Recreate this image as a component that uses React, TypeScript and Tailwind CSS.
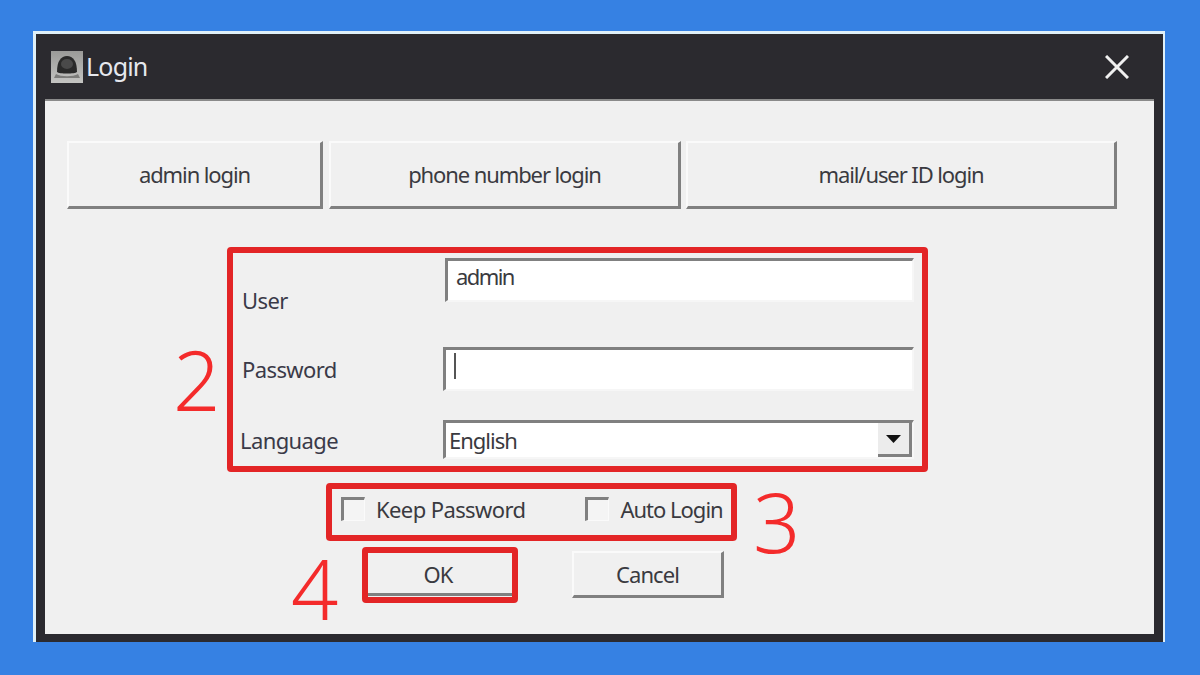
import React from 'react';

const uiFont = "font-['Noto_Sans',sans-serif]";

const TopButton = ({ label, width }: { label: string; width: string }) => (
  <button className={`${width} h-[68px] bg-[#f0f0f0] border-t-2 border-l-2 border-t-[#fafafa] border-l-[#fafafa] border-r-[3px] border-b-[3px] border-r-[#808080] border-b-[#808080] text-[22px] text-[#3a3a40] tracking-[-1.1px]`}>
    {label}
  </button>
);

const Field = ({ className, children }: { className: string; children?: React.ReactNode }) => (
  <div className={`${className} bg-white border-t-[3px] border-l-[3px] border-t-[#808080] border-l-[#808080] border-r-2 border-b-2 border-r-[#f6f6f6] border-b-[#f6f6f6] text-[22px] text-[#3a3a40]`}>
    {children}
  </div>
);

const Check = ({ className }: { className: string }) => (
  <div className={`${className} w-6 h-6 bg-[#f4f4f4] border-t-[3px] border-l-[3px] border-t-[#808080] border-l-[#808080] border-r border-b border-r-[#fafafa] border-b-[#fafafa]`} />
);

export default function App() {
  return (
    <div className={`${uiFont} w-[1200px] h-[675px] overflow-hidden bg-[#3681e3] pt-[31px] pl-[33px]`}>
      <div className="w-[1132px] h-[611px] flex flex-col bg-[#2b2a2f] border-t-[3px] border-l-[3px] border-r-2 border-[#dff0f8] px-[9px] pb-[8px] blur-[0.5px]">
        {/* title bar */}
        <div className="h-[67px] flex items-center justify-between border-b-2 border-b-[#8a8a8a] shrink-0">
          <div className="flex items-center gap-[3px] ml-[6px]">
            <svg width="32" height="32" viewBox="0 0 32 32">
              <defs>
                <linearGradient id="ico" x1="0" y1="0" x2="0" y2="1">
                  <stop offset="0" stopColor="#9a9a98" />
                  <stop offset="1" stopColor="#c4c4c2" />
                </linearGradient>
              </defs>
              <rect width="32" height="32" fill="url(#ico)" />
              <path d="M6 21C6 10 10 5 16 5s10 5 10 16c-2 2-18 2-20 0z" fill="#2a2a2a" />
              <ellipse cx="16" cy="13" rx="6" ry="5" fill="#4a4a4a" />
              <path d="M5 23c5 3 17 3 22 0l2 4H3z" fill="#7c7c7a" />
            </svg>
            <span className="text-[25px] text-[#e6e8ee] tracking-[-0.8px]">Login</span>
          </div>
          <svg className="mr-[25px]" width="24" height="24" viewBox="0 0 24 24" fill="none" stroke="#f0f0f0" strokeWidth="3">
            <path d="M1 1l22 22M23 1L1 23" />
          </svg>
        </div>

        {/* dialog body */}
        <div className="relative flex-1 bg-[#f0f0f0] pt-[40px] pl-[22px]">
          <div className="flex">
            <TopButton label="admin login" width="w-[256px]" />
            <div className="w-[6px]" />
            <TopButton label="phone number login" width="w-[352px]" />
            <div className="w-[5px]" />
            <TopButton label="mail/user ID login" width="w-[431px]" />
          </div>

          {/* section 2 */}
          <div className="ml-[160px] mt-[38px] w-[701px] h-[225px] flex border-[6px] border-[#e32526] rounded-[4px] text-[22px] text-[#3a3a48] tracking-[-0.6px]">
            <div className="w-[210px] pl-[9px] shrink-0">
              <div className="h-[28px] mt-[33px] leading-[28px]">User</div>
              <div className="h-[28px] mt-[41px] leading-[28px]">Password</div>
              <div className="h-[28px] mt-[43px] leading-[28px] -ml-[2px]">Language</div>
            </div>
            <div className="w-[471px] pt-[5px]">
              <Field className="h-[44px] ml-[2px] pl-[8px] leading-[30px] tracking-[-1.6px]">admin</Field>
              <Field className="h-[44px] mt-[45px] pl-[8px] pt-[3px]">
                <div className="w-[2px] h-[26px] bg-[#555]" />
              </Field>
              <Field className="h-[39px] mt-[29px] pl-[3px] leading-[34px] flex justify-between tracking-[-1px]">
                <span>English</span>
                <div className="w-[34px] h-[34px] flex items-center justify-center bg-[#ececec] border-r-[3px] border-b-[3px] border-r-[#808080] border-b-[#808080]">
                  <svg width="15" height="8" viewBox="0 0 15 8"><path d="M0 0h15L7.5 8z" fill="#111" /></svg>
                </div>
              </Field>
            </div>
          </div>

          {/* section 3 */}
          <div className="ml-[259px] mt-[11px] w-[411px] h-[58px] flex items-center pl-[9px] border-[6px] border-[#e32526] rounded-[4px] text-[22px] text-[#3a3a40] tracking-[-0.6px]">
            <Check className="mb-[7px]" />
            <span className="ml-[11px] mb-[6px]">Keep Password</span>
            <Check className="ml-[60px] mb-[7px]" />
            <span className="ml-[11px] mb-[6px] tracking-[-1px]">Auto Login</span>
          </div>

          {/* section 4 */}
          <div className="flex items-start mt-[6px] ml-[295px]">
            <div className="w-[156px] h-[56px] border-[6px] border-[#e32526] rounded-[4px]">
              <div className="h-[43px] pt-[2px] pr-[4px] border-b-[3px] border-b-[#808080] flex items-center justify-center text-[22px] text-[#3a3a40] tracking-[-1px]">OK</div>
            </div>
            <button className="ml-[54px] mt-[4px] w-[152px] h-[47px] bg-[#f0f0f0] border-t-2 border-l-2 border-t-[#fafafa] border-l-[#fafafa] border-r-[3px] border-b-[3px] border-r-[#808080] border-b-[#808080] text-[22px] text-[#3a3a40] tracking-[-0.9px]">
              Cancel
            </button>
          </div>

          {/* annotation numbers */}
          <span className="absolute left-[128px] top-[228px] font-light text-[83px] leading-[100px] text-[#f42b2b]">2</span>
          <span className="absolute left-[708px] top-[370px] font-light text-[83px] leading-[100px] text-[#f42b2b]">3</span>
          <span className="absolute left-[246px] top-[437px] font-light text-[83px] leading-[100px] text-[#f42b2b]">4</span>
        </div>
      </div>
    </div>
  );
}
